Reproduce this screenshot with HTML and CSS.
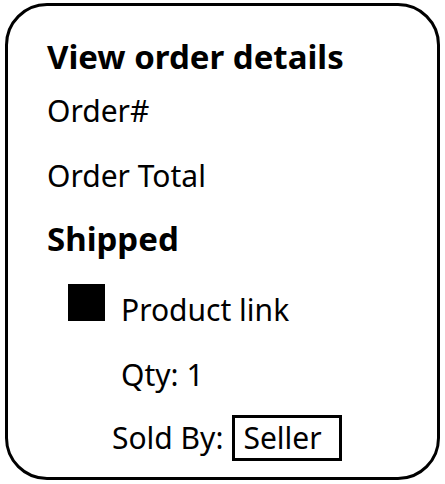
FILE: index.html
```html
<!DOCTYPE html>
<html>
<head>
<meta charset="utf-8">
<link rel="stylesheet" href="styles.css">
</head>
<body>
<div class="card">
  <div class="title">View order details</div>
  <div class="line order-num">Order#</div>
  <div class="line order-total">Order Total</div>
  <div class="title shipped">Shipped</div>
  <div class="product">
    <span class="thumb"></span>
    <span class="line">Product link</span>
  </div>
  <div class="line qty">Qty: 1</div>
  <div class="sold">
    <span class="line">Sold By:</span>
    <span class="line seller">Seller</span>
  </div>
</div>
</body>
</html>
```
FILE: styles.css
```css
html, body {
  margin: 0;
  padding: 0;
  background: #fff;
}
body {
  font-family: "Noto Sans", "Open Sans", sans-serif;
  color: #000;
}
.card {
  box-sizing: border-box;
  margin: 3px 0 0 5px;
  width: 435px;
  height: 477px;
  border: 3px solid #000;
  border-radius: 42px;
  padding: 31px 0 0 39px;
}
.title {
  font-size: 33px;
  font-weight: 700;
  line-height: 40px;
}
.line {
  font-size: 30px;
  line-height: 40px;
}
.order-num { margin-top: 14px; }
.order-total { margin-top: 25px; }
.shipped { margin-top: 23px; }
.product {
  display: flex;
  align-items: baseline;
  gap: 16px;
  margin-top: 25px;
  margin-left: 21px;
}
.thumb {
  display: block;
  width: 37px;
  height: 37px;
  background: #000;
  margin-bottom: -2px;
}
.qty {
  margin-top: 25px;
  margin-left: 74px;
}
.sold {
  display: flex;
  align-items: baseline;
  gap: 9px;
  margin-top: 20px;
  margin-left: 65px;
}
.seller {
  border: 3px solid #000;
  padding: 0 17px 0 8px;
}
```
